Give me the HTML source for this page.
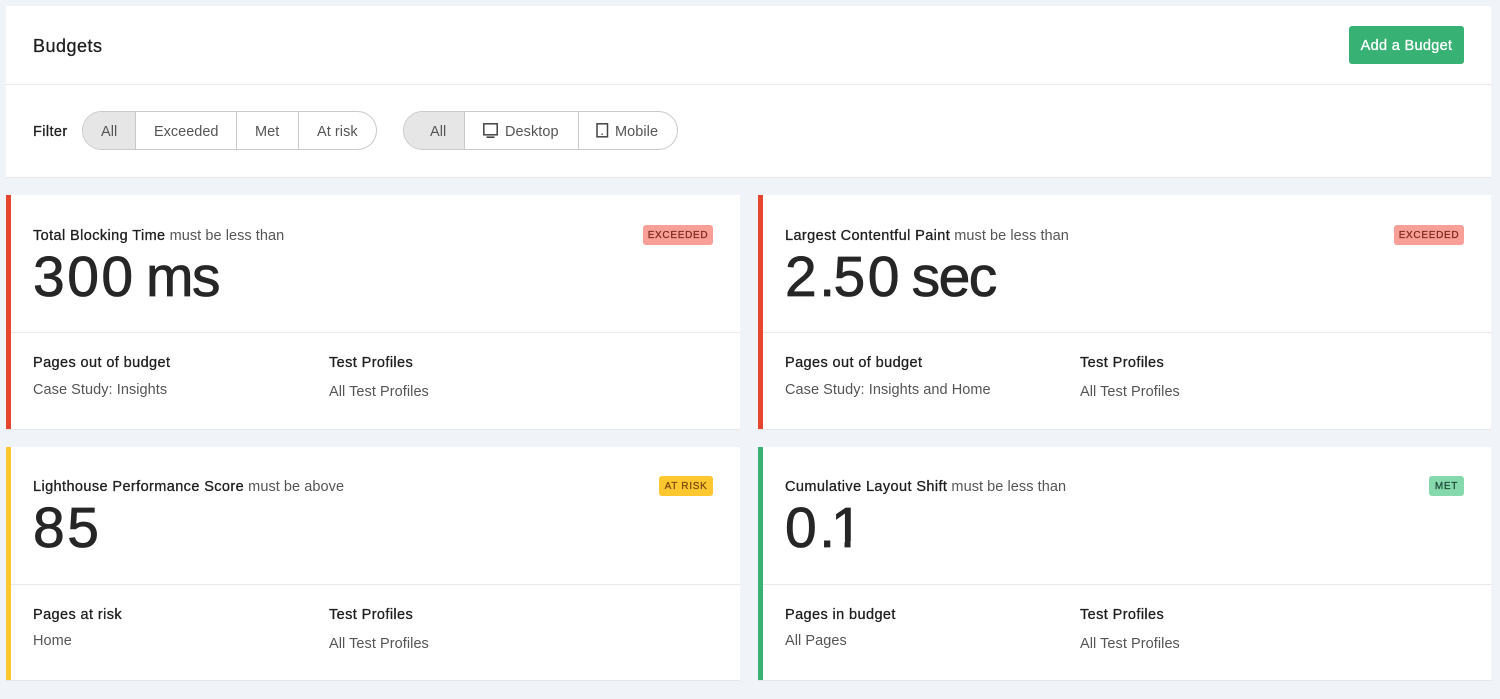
<!DOCTYPE html>
<html><head><meta charset="utf-8"><style>
html,body{margin:0;padding:0;width:1500px;height:699px;overflow:hidden;background:#f0f3f8;font-family:"Liberation Sans",sans-serif;}
.b{position:absolute;background:#fff;}
.t{position:absolute;white-space:nowrap;line-height:20px;font-size:14.5px;color:#555;letter-spacing:.06px;}
.s{color:#1f1f1f;-webkit-text-stroke:.3px #1f1f1f;letter-spacing:.4px;}
.n{position:absolute;white-space:nowrap;font-size:57px;line-height:60px;color:#262626;-webkit-text-stroke:.8px #262626;}
.d{letter-spacing:2.5px;}
.u{letter-spacing:-1.5px;}
.h{position:absolute;height:1px;background:#e9e9ec;}
.bar{position:absolute;width:5px;}
.p{position:absolute;white-space:nowrap;font-size:10px;letter-spacing:.7px;line-height:21px;height:20px;border-radius:3px;text-align:center;-webkit-text-stroke:.25px;}
.sep{position:absolute;top:112px;height:37px;width:1px;background:#c9c9c9;}
.one{display:inline-block;clip-path:polygon(0 0,100% 0,100% 43px,19.5px 43px,19.5px 100%,13.5px 100%,13.5px 43px,0 43px);}
</style></head><body>
<div class="b" style="left:6px;top:6px;width:1485px;height:171px;border-bottom:1px solid #e9e9ec"></div>
<div class="h" style="left:6px;top:84px;width:1485px"></div>
<div class="t s" style="left:33px;top:36px;font-size:18px;letter-spacing:.5px">Budgets</div>
<div style="position:absolute;left:1349px;top:26px;width:115px;height:38px;background:#38b174;border-radius:3px;color:#fff;font-size:14.5px;line-height:40px;text-align:center;letter-spacing:.33px;-webkit-text-stroke:.3px #fff">Add a Budget</div>
<div class="t s" style="left:33px;top:122px;font-size:14.5px">Filter</div>

<div style="position:absolute;left:82px;top:111px;width:293px;height:37px;border:1px solid #c9c9c9;border-radius:20px;overflow:hidden"><div style="width:53px;height:37px;background:#e6e6e6"></div></div>
<div class="sep" style="left:135px"></div><div class="sep" style="left:236px"></div><div class="sep" style="left:298px"></div>
<div class="t" style="left:101px;top:122px">All</div>
<div class="t" style="left:154px;top:122px;letter-spacing:0">Exceeded</div>
<div class="t" style="left:255px;top:122px">Met</div>
<div class="t" style="left:317px;top:122px">At risk</div>

<div style="position:absolute;left:403px;top:111px;width:273px;height:37px;border:1px solid #c9c9c9;border-radius:20px;overflow:hidden"><div style="width:61px;height:37px;background:#e6e6e6"></div></div>
<div class="sep" style="left:464px"></div><div class="sep" style="left:578px"></div>
<div class="t" style="left:430px;top:122px">All</div>
<svg style="position:absolute;left:483px;top:123px" width="16" height="16" viewBox="0 0 16 16"><rect x=".8" y=".8" width="13.4" height="11" fill="none" stroke="#444" stroke-width="1.5"/><path d="M3.5 14.2h8" stroke="#444" stroke-width="1.6"/></svg>
<div class="t" style="left:505px;top:122px">Desktop</div>
<svg style="position:absolute;left:596px;top:123px" width="13" height="15" viewBox="0 0 13 15"><rect x="1" y=".8" width="10.5" height="13" fill="none" stroke="#444" stroke-width="1.5"/><rect x="5.5" y="10.5" width="1.4" height="1.4" fill="#444"/></svg>
<div class="t" style="left:615px;top:122px">Mobile</div>

<div class="b" style="left:6px;top:195px;width:734px;height:234px;border-bottom:1px solid #e6e6e9"></div>
<div class="bar" style="left:6px;top:195px;height:234px;background:#e8452f"></div>
<div class="h" style="left:11px;top:332px;width:729px"></div>
<div class="t" style="left:33px;top:226px"><span class="s">Total Blocking Time</span> must be less than</div>
<div class="n" style="left:33px;top:247px"><span class="d">300</span><span style="letter-spacing:-5.4px"> </span><span class="u">ms</span></div>
<div class="p" style="left:643px;top:225px;width:70px;background:#f8a097;color:#7e2a1c;-webkit-text-stroke-color:#7e2a1c">EXCEEDED</div>
<div class="t s" style="left:33px;top:353px">Pages out of budget</div>
<div class="t" style="left:33px;top:380px">Case Study: Insights</div>
<div class="t s" style="left:329px;top:353px">Test Profiles</div>
<div class="t" style="left:329px;top:382px">All Test Profiles</div>

<div class="b" style="left:758px;top:195px;width:733px;height:234px;border-bottom:1px solid #e6e6e9"></div>
<div class="bar" style="left:758px;top:195px;height:234px;background:#e8452f"></div>
<div class="h" style="left:763px;top:332px;width:728px"></div>
<div class="t" style="left:785px;top:226px"><span class="s">Largest Contentful Paint</span> must be less than</div>
<div class="n" style="left:785px;top:247px"><span class="d">2</span><span style="letter-spacing:-1.5px">.</span><span class="d">50</span><span style="letter-spacing:-6.2px"> </span><span class="u">sec</span></div>
<div class="p" style="left:1394px;top:225px;width:70px;background:#f8a097;color:#7e2a1c;-webkit-text-stroke-color:#7e2a1c">EXCEEDED</div>
<div class="t s" style="left:785px;top:353px">Pages out of budget</div>
<div class="t" style="left:785px;top:380px">Case Study: Insights and Home</div>
<div class="t s" style="left:1080px;top:353px">Test Profiles</div>
<div class="t" style="left:1080px;top:382px">All Test Profiles</div>

<div class="b" style="left:6px;top:447px;width:734px;height:233px;border-bottom:1px solid #e6e6e9"></div>
<div class="bar" style="left:6px;top:447px;height:233px;background:#fdc82f"></div>
<div class="h" style="left:11px;top:584px;width:729px"></div>
<div class="t" style="left:33px;top:477px"><span class="s">Lighthouse Performance Score</span> must be above</div>
<div class="n" style="left:33px;top:498px"><span class="d">85</span></div>
<div class="p" style="left:659px;top:476px;width:54px;background:#fdc82f;color:#7a4a12;-webkit-text-stroke-color:#7a4a12">AT RISK</div>
<div class="t s" style="left:33px;top:605px">Pages at risk</div>
<div class="t" style="left:33px;top:631px">Home</div>
<div class="t s" style="left:329px;top:605px">Test Profiles</div>
<div class="t" style="left:329px;top:634px">All Test Profiles</div>

<div class="b" style="left:758px;top:447px;width:733px;height:233px;border-bottom:1px solid #e6e6e9"></div>
<div class="bar" style="left:758px;top:447px;height:233px;background:#38b174"></div>
<div class="h" style="left:763px;top:584px;width:728px"></div>
<div class="t" style="left:785px;top:477px"><span class="s">Cumulative Layout Shift</span> must be less than</div>
<div class="n" style="left:785px;top:498px"><span class="d">0</span><span style="letter-spacing:-4px">.</span><span class="one">1</span></div>
<div class="p" style="left:1429px;top:476px;width:35px;background:#85d9ad;color:#1c4a35;-webkit-text-stroke-color:#1c4a35">MET</div>
<div class="t s" style="left:785px;top:605px">Pages in budget</div>
<div class="t" style="left:785px;top:631px">All Pages</div>
<div class="t s" style="left:1080px;top:605px">Test Profiles</div>
<div class="t" style="left:1080px;top:634px">All Test Profiles</div>
</body></html>
